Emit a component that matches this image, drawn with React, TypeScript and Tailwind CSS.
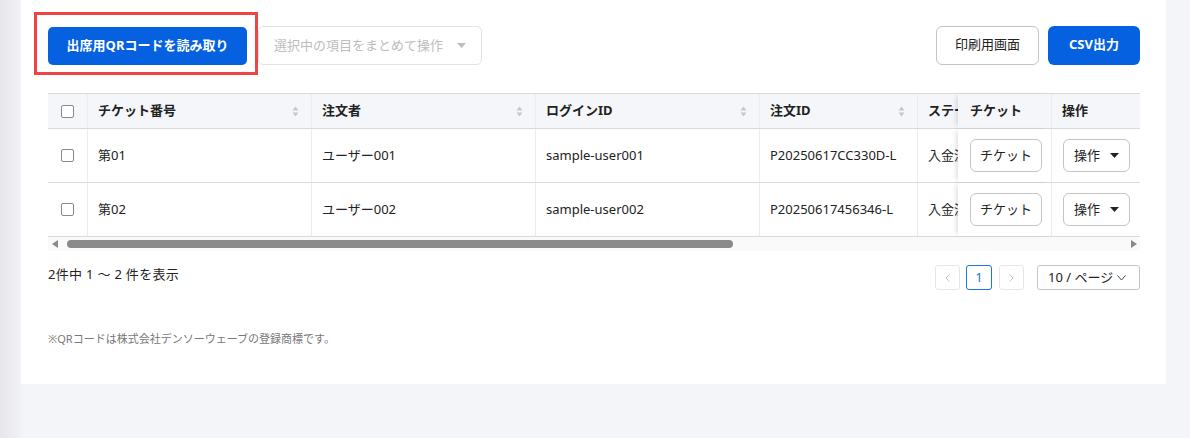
import React from "react";

const font = { fontFamily: '"Noto Sans", "Noto Sans CJK JP", sans-serif' };

const SortIcon = () => (
    <svg width="7" height="11" viewBox="0 0 7 11" className="shrink-0">
        <path d="M3.5 0.5 L6.5 4.5 L0.5 4.5 Z" fill="#c7c7c7" />
        <path d="M3.5 10.5 L6.5 6.5 L0.5 6.5 Z" fill="#c7c7c7" />
    </svg>
);

const Caret = ({ color }: { color: string }) => (
    <svg width="9" height="5" viewBox="0 0 9 5">
        <path d="M0 0 L9 0 L4.5 5 Z" fill={color} />
    </svg>
);

const Checkbox = () => (
    <span className="block w-[13px] h-[13px] border border-[#8a8a8a] rounded-[2px] bg-white" />
);

const rows = [
    { no: "第01", user: "ユーザー001", login: "sample-user001", order: "P20250617CC330D-L" },
    { no: "第02", user: "ユーザー002", login: "sample-user002", order: "P20250617456346-L" },
];

const cols = "grid grid-cols-[40px_224px_224px_224px_158px_40px_94px_88px]";

const App: React.FC = () => {
    return (
        <div className="w-[1190px] h-[438px] bg-[#f4f5f9] flex text-[#222]" style={font}>
            <div className="w-[21px] h-full bg-gradient-to-r from-[#e6e6eb] to-[#f2f2f6]" />
            <div className="w-[1145px] h-[384px] bg-white flex flex-col">
                {/* toolbar */}
                <div className="flex items-center justify-between pl-[13px] pr-[26px] pt-[12px]">
                    <div className="flex items-start">
                        <div className="border-[3px] border-[#ef4444] pl-[11px] pr-[8px] pt-[12px] pb-[7px]">
                            <button className="w-[199px] h-[38px] rounded-[5px] bg-[#0561df] text-white text-[13px] font-bold">
                                出席用QRコードを読み取り
                            </button>
                        </div>
                        <button className="w-[224px] h-[39px] mt-[14px] rounded-[5px] border border-[#e3e3e3] text-[13px] text-[#bdbdbd] flex items-center justify-center gap-[14px]">
                            選択中の項目をまとめて操作
                            <Caret color="#bdbdbd" />
                        </button>
                    </div>
                    <div className="flex items-center gap-[9px] mt-[3px]">
                        <button className="w-[103px] h-[39px] rounded-[6px] border border-[#c4c4c4] text-[13px] text-[#222]">
                            印刷用画面
                        </button>
                        <button className="w-[92px] h-[39px] rounded-[6px] bg-[#0561df] text-white text-[13px] font-bold">
                            CSV出力
                        </button>
                    </div>
                </div>

                {/* table */}
                <div className="ml-[27px] mt-[18px] w-[1092px] text-[13px]">
                    <div className={`${cols} h-[36px] bg-[#f5f6f9] border-t border-b border-[#d9d9d9] font-bold`}>
                        <div className="flex items-center justify-center border-r border-[#ececec]">
                            <Checkbox />
                        </div>
                        {["チケット番号", "注文者", "ログインID", "注文ID"].map((h) => (
                            <div key={h} className="flex items-center justify-between pl-[10px] pr-[12px] border-r border-[#ececec]">
                                <span>{h}</span>
                                <SortIcon />
                            </div>
                        ))}
                        <div className="flex items-center pl-[10px] overflow-hidden whitespace-nowrap">ステー</div>
                        <div className="flex items-center pl-[12px] border-r border-[#ececec] shadow-[-4px_0_5px_-2px_rgba(0,0,0,0.12)] bg-[#f5f6f9]">チケット</div>
                        <div className="flex items-center pl-[10px] bg-[#f5f6f9]">操作</div>
                    </div>
                    {rows.map((r) => (
                        <div key={r.no} className={`${cols} h-[54px] border-b border-[#d9d9d9]`}>
                            <div className="flex items-center justify-center border-r border-[#ececec]">
                                <Checkbox />
                            </div>
                            <div className="flex items-center pl-[10px] border-r border-[#ececec]">{r.no}</div>
                            <div className="flex items-center pl-[10px] border-r border-[#ececec]">{r.user}</div>
                            <div className="flex items-center pl-[10px] border-r border-[#ececec]">{r.login}</div>
                            <div className="flex items-center pl-[10px] border-r border-[#ececec]">{r.order}</div>
                            <div className="flex items-center pl-[10px] overflow-hidden whitespace-nowrap">入金済</div>
                            <div className="flex items-center pl-[12px] border-r border-[#ececec] bg-white shadow-[-4px_0_5px_-2px_rgba(0,0,0,0.12)]">
                                <button className="w-[72px] h-[33px] rounded-[6px] border border-[#c4c4c4] text-[13px]">チケット</button>
                            </div>
                            <div className="flex items-center pl-[11px] bg-white">
                                <button className="w-[67px] h-[33px] rounded-[6px] border border-[#c4c4c4] text-[13px] flex items-center justify-center gap-[10px]">
                                    操作
                                    <Caret color="#222" />
                                </button>
                            </div>
                        </div>
                    ))}
                    {/* scrollbar */}
                    <div className="h-[14px] flex items-center bg-[#fafafa]">
                        <svg width="6" height="8" viewBox="0 0 6 8" className="ml-[4px]">
                            <path d="M6 0 L6 8 L0 4 Z" fill="#8a8a8a" />
                        </svg>
                        <div className="ml-[9px] w-[666px] h-[8px] rounded-full bg-[#8a8a8a]" />
                        <div className="flex-1" />
                        <svg width="6" height="8" viewBox="0 0 6 8" className="mr-[3px]">
                            <path d="M0 0 L0 8 L6 4 Z" fill="#8a8a8a" />
                        </svg>
                    </div>
                </div>

                {/* pagination */}
                <div className="ml-[27px] w-[1092px] mt-[14px] flex items-start justify-between">
                    <span className="text-[13px] tracking-[0.3px] text-[#222]">2件中 1 ～ 2 件を表示</span>
                    <div className="flex items-center">
                        <div className="w-[25px] h-[25px] rounded-[3px] border border-[#e6e6e6] flex items-center justify-center">
                            <svg width="5" height="8" viewBox="0 0 5 8"><path d="M4.5 0.5 L1 4 L4.5 7.5" stroke="#c4c4c4" fill="none" /></svg>
                        </div>
                        <div className="ml-[6px] w-[26px] h-[25px] rounded-[3px] border border-[#1a73e8] text-[#1a73e8] text-[13px] flex items-center justify-center">1</div>
                        <div className="ml-[7px] w-[25px] h-[25px] rounded-[3px] border border-[#e6e6e6] flex items-center justify-center">
                            <svg width="5" height="8" viewBox="0 0 5 8"><path d="M0.5 0.5 L4 4 L0.5 7.5" stroke="#c4c4c4" fill="none" /></svg>
                        </div>
                        <div className="ml-[13px] w-[103px] h-[25px] rounded-[3px] border border-[#c4c4c4] text-[13px] flex items-center pl-[10px] gap-[4px]">
                            10 / ページ
                            <svg width="9" height="6" viewBox="0 0 9 6"><path d="M0.5 0.5 L4.5 5 L8.5 0.5" stroke="#444" fill="none" /></svg>
                        </div>
                    </div>
                </div>

                <p className="ml-[27px] mt-[41px] text-[11px] text-[#777]">
                    ※QRコードは株式会社デンソーウェーブの登録商標です。
                </p>
            </div>
        </div>
    );
};

export default App;
